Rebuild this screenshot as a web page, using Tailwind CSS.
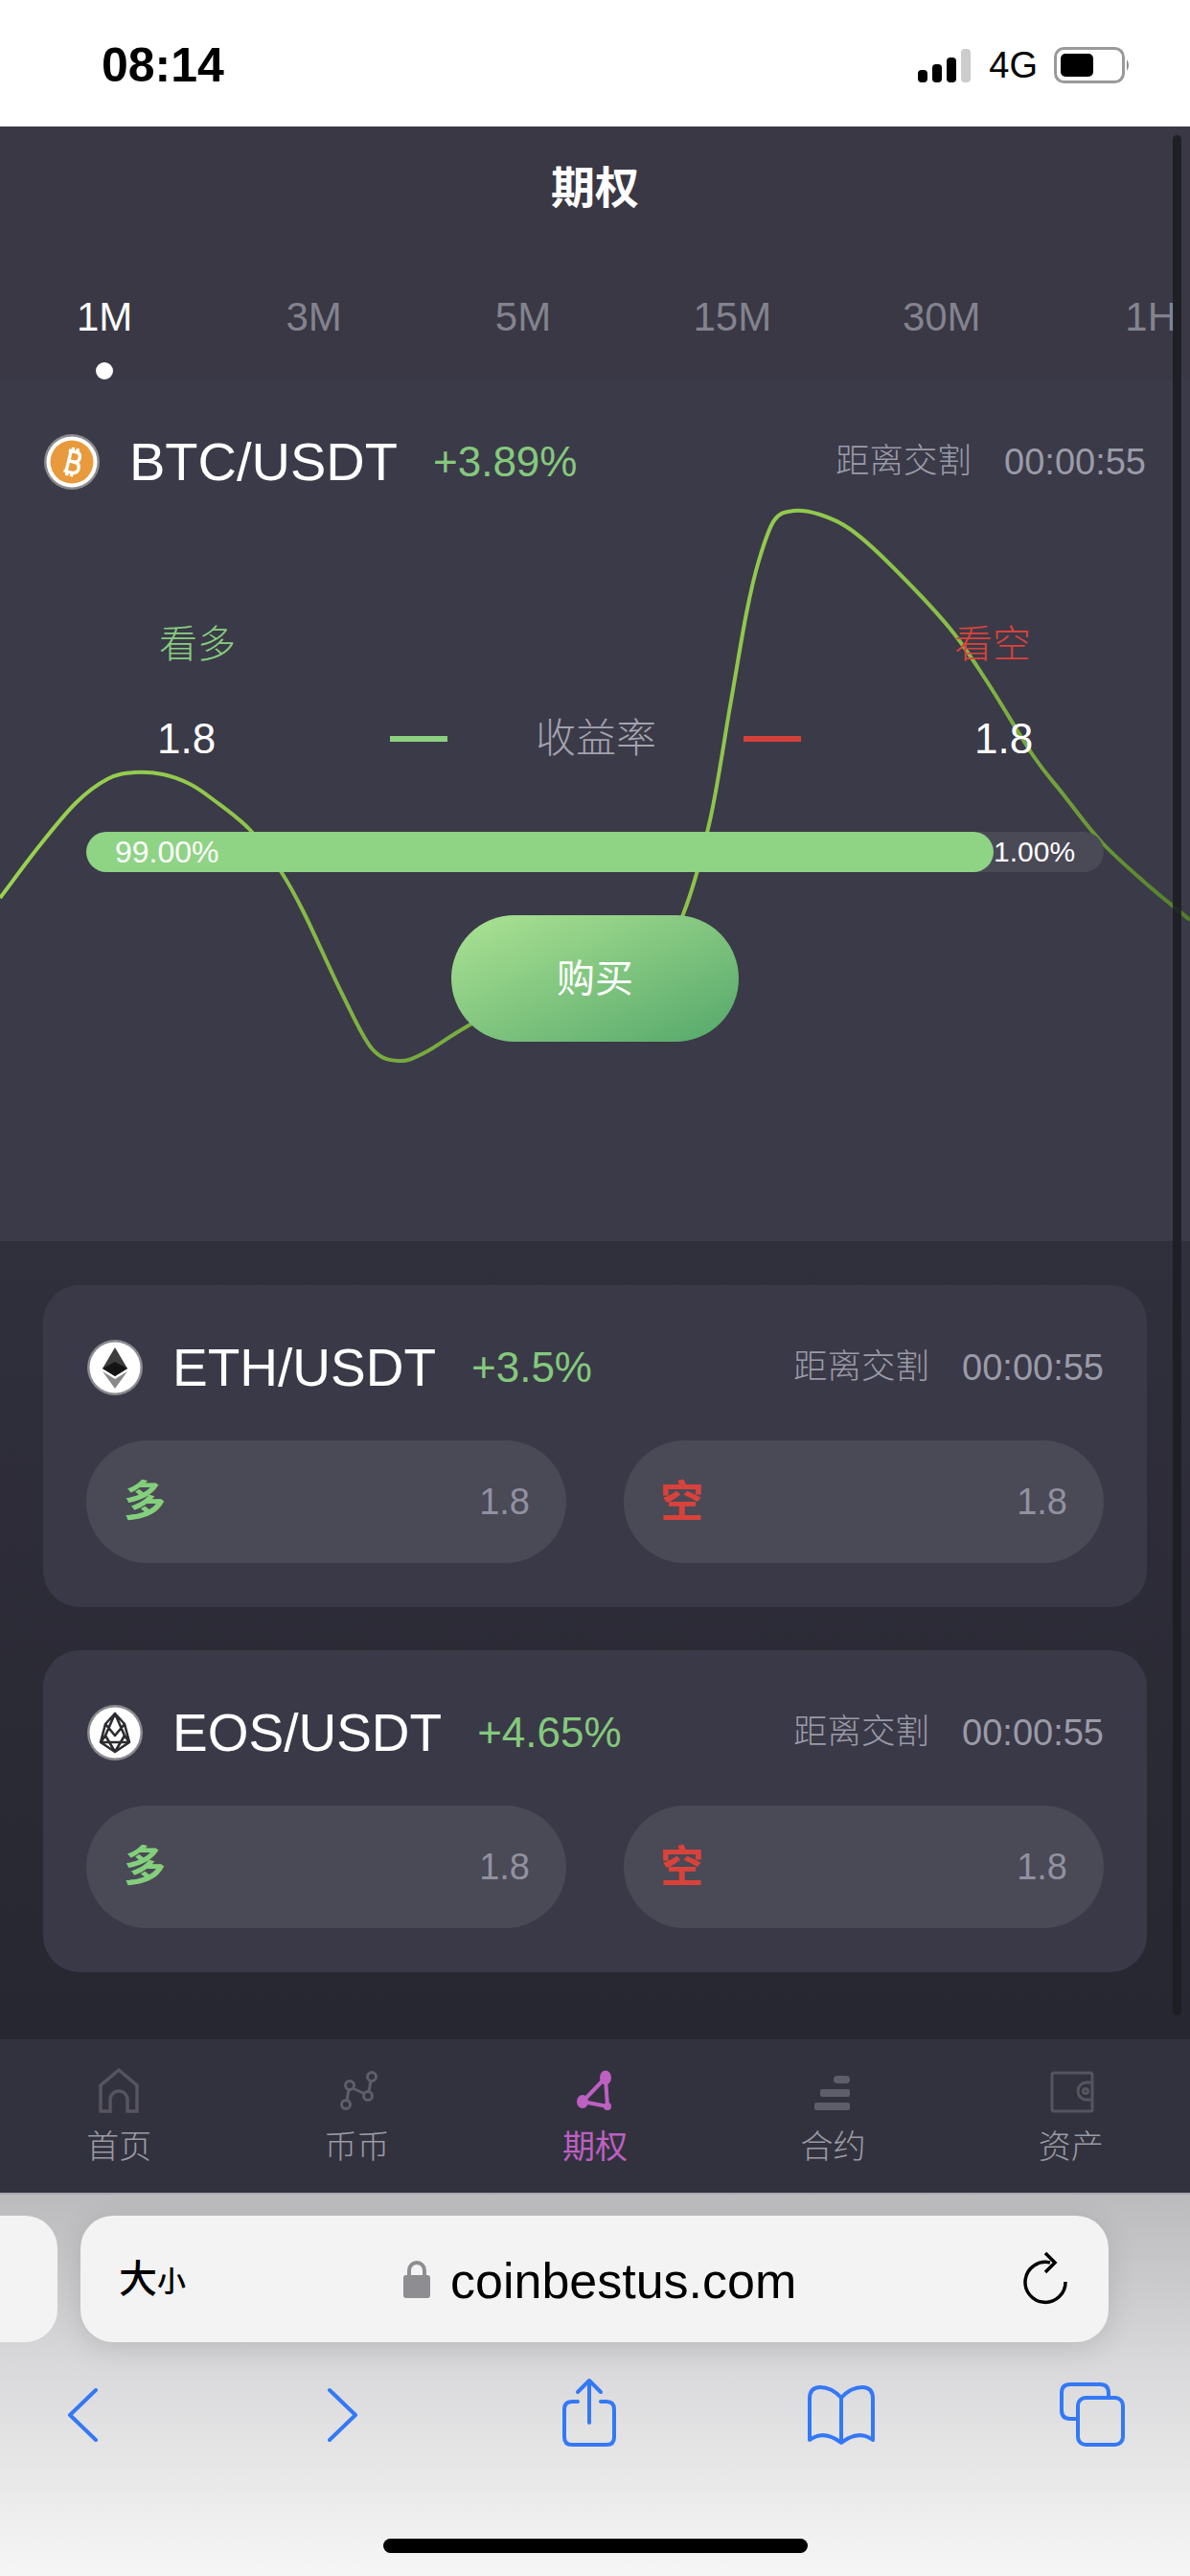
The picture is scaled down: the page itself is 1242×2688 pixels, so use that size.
<!DOCTYPE html>
<html lang="en">
<head>
    <meta charset="UTF-8">
    <meta name="viewport" content="width=device-width, initial-scale=1.0">
    <title>期权</title>
    <script src="https://cdn.jsdelivr.net/npm/@tailwindcss/browser@4"></script>
</head>
<body class="relative w-[1242px] h-[2688px] overflow-hidden bg-white font-['Liberation_Sans','Noto_Sans_CJK_SC',sans-serif]">
    <!-- status bar -->
    <div class="h-[132px] bg-white flex items-center justify-between pl-[106px] pr-[62px] pt-[3px]">
        <span class="text-[50px] leading-none font-bold text-black">08:14</span>
        <div class="flex items-center">
            <svg width="56" height="36" viewBox="0 0 56 36" class="mr-[18px]">
                <rect x="0" y="23" width="10" height="13" rx="4" fill="#000"/>
                <rect x="15" y="17" width="10" height="19" rx="4" fill="#000"/>
                <rect x="30" y="10" width="10" height="26" rx="4" fill="#000"/>
                <rect x="45" y="1" width="10" height="35" rx="4" fill="#ccc"/>
            </svg>
            <span class="text-[38px] leading-none text-black mr-[17px]">4G</span>
            <svg width="80" height="38" viewBox="0 0 80 38">
                <rect x="1.5" y="1.5" width="71" height="35" rx="9" fill="none" stroke="#999" stroke-width="3"/>
                <rect x="7" y="7" width="34" height="24" rx="5" fill="#000"/>
                <path d="M76 13 Q80 19 76 25 Z" fill="#888"/>
            </svg>
        </div>
    </div>

    <!-- title + timeframes -->
    <div class="h-[264px] bg-[#393844] overflow-hidden">
        <div class="h-[128px] flex items-center justify-center">
            <h1 class="text-[46px] leading-none font-bold text-white">期权</h1>
        </div>
        <div class="grid grid-cols-[repeat(6,218.4px)] text-[42px] leading-none text-[#83838f] pt-[50px]">
            <div class="flex flex-col items-center text-white"><span>1M</span><span class="mt-[26px] w-[18px] h-[18px] rounded-full bg-white"></span></div>
            <div class="text-center">3M</div>
            <div class="text-center">5M</div>
            <div class="text-center">15M</div>
            <div class="text-center">30M</div>
            <div class="text-center">1H</div>
        </div>
    </div>

    <!-- current pair -->
    <section class="relative h-[899px] bg-[#3b3a48] overflow-hidden">
        <svg class="absolute inset-0" width="1242" height="899" viewBox="0 396 1242 899" fill="none">
            <defs>
                <linearGradient id="lineFade" gradientUnits="userSpaceOnUse" x1="0" y1="0" x2="1242" y2="0">
                    <stop offset="0" stop-color="#9bd350"/>
                    <stop offset="0.2" stop-color="#8fc64b"/>
                    <stop offset="0.34" stop-color="#76a93e"/>
                    <stop offset="0.66" stop-color="#93cc4e"/>
                    <stop offset="0.8" stop-color="#89be48"/>
                    <stop offset="1" stop-color="#527d2a"/>
                </linearGradient>
            </defs>
            <path id="priceLine" stroke="url(#lineFade)" stroke-width="4"/>
        </svg>

        <div class="relative flex items-center h-[172px] pl-[45px] pr-[46px]">
            <svg width="60" height="60" viewBox="0 0 60 60" class="mr-[30px]">
                <circle cx="30" cy="30" r="29" fill="#8b8b8f"/>
                <circle cx="30" cy="30" r="26.500" fill="#fff"/>
                <circle cx="30" cy="30" r="22.500" fill="#e99a3c"/>
                <g transform="rotate(14 30 30)" fill="none" stroke="#fff" stroke-width="3.400">
                    <path d="M24 19 H32 Q37 19 37 24 Q37 29.500 32 29.500 H25 M32 29.500 Q38.500 29.500 38.500 35 Q38.500 41 32 41 H24 M26.500 19 V41 M28 15 V19 M33 15 V19 M28 41 V45 M33 41 V45"/>
                </g>
            </svg>
            <span class="text-[56px] leading-none text-white">BTC/USDT</span>
            <span class="ml-[37px] text-[44px] leading-none text-[#84c97c]">+3.89%</span>
            <span class="ml-auto text-[35.500px] leading-none text-[#9a9ba8] font-light">距离交割</span>
            <span class="ml-[34px] text-[38px] leading-none text-[#9a9ba8]">00:00:55</span>
        </div>

        <div class="relative flex justify-between pl-[166px] pr-[166px] mt-[72px] text-[40px] leading-[64px] font-light">
            <span class="text-[#86cc7f]">看多</span>
            <span class="text-[#d9423a]">看空</span>
        </div>
        <div class="relative flex items-center mt-[35px] h-[64px]">
            <span class="ml-[164px] w-[64px] text-[44px] leading-none text-white">1.8</span>
            <span class="ml-[179px] w-[60px] h-[6px] bg-[#8bd07e]"></span>
            <span class="ml-[92px] w-[126px] whitespace-nowrap text-center text-[42px] leading-none text-[#a2a3ae] font-light">收益率</span>
            <span class="ml-[91px] w-[60px] h-[6px] bg-[#d4413a]"></span>
            <span class="ml-[181px] text-[44px] leading-none text-white">1.8</span>
        </div>

        <div class="relative mx-[90px] mt-[65px] h-[42px] rounded-full bg-[#4a4956] flex items-center text-[30px] leading-none text-white">
            <div class="h-full w-[947px] rounded-full bg-[#8fd385] flex items-center pl-[30px] text-[32px]">99.00%</div>
            <span class="font-light">1.00%</span>
        </div>

        <div class="relative mt-[45px] flex justify-center">
            <button class="w-[300px] h-[132px] rounded-full bg-gradient-to-br from-[#ace394] to-[#54a86b] text-[40px] leading-none text-white">购买</button>
        </div>
    </section>

    <!-- other pairs -->
    <main class="h-[833px] bg-gradient-to-b from-[#302f3c] to-[#272731] px-[45px] pt-[46px] flex flex-col gap-[45px]">
        <article class="h-[336px] rounded-[38px] bg-[#3a3947] px-[45px]">
            <div class="h-[162px] pt-[10px] flex items-center">
                <svg width="60" height="60" viewBox="0 0 60 60" class="mr-[30px]">
                    <circle cx="30" cy="30" r="29" fill="#8b8b8f"/>
                    <circle cx="30" cy="30" r="26.500" fill="#fff"/>
                    <path d="M30 9 L43 31 L30 39 L17 31 Z" fill="#3c3c3d"/>
                    <path d="M30 24 L43 31 L30 39 L17 31 Z" fill="#141414"/>
                    <path d="M17 34 L30 42 L43 34 L30 52 Z" fill="#8a8a8a"/>
                </svg>
                <span class="text-[55px] leading-none text-white">ETH/USDT</span>
                <span class="ml-[37px] text-[44px] leading-none text-[#84c97c]">+3.5%</span>
                <span class="ml-auto text-[35.500px] leading-none text-[#9a9ba8] font-light">距离交割</span>
                <span class="ml-[34px] text-[38px] leading-none text-[#9a9ba8]">00:00:55</span>
            </div>
            <div class="grid grid-cols-2 gap-[60px]">
                <div class="h-[128px] rounded-full bg-[#4a4956] flex items-center justify-between pl-[39px] pr-[38px]">
                    <span class="text-[44px] leading-none font-bold text-[#84cf7c]">多</span>
                    <span class="text-[38px] leading-none text-[#9091a0]">1.8</span>
                </div>
                <div class="h-[128px] rounded-full bg-[#4a4956] flex items-center justify-between pl-[38px] pr-[38px]">
                    <span class="text-[45px] leading-none font-bold text-[#d9423a]">空</span>
                    <span class="text-[38px] leading-none text-[#9091a0]">1.8</span>
                </div>
            </div>
        </article>

        <article class="h-[336px] rounded-[38px] bg-[#3a3947] px-[45px]">
            <div class="h-[162px] pt-[10px] flex items-center">
                <svg width="60" height="60" viewBox="0 0 60 60" class="mr-[30px]">
                    <circle cx="30" cy="30" r="29" fill="#8b8b8f"/>
                    <circle cx="30" cy="30" r="26.500" fill="#fff"/>
                    <path d="M30 10 L40 21 L45 40 L30 50 L15 40 L20 21 Z M20 21 L30 33 L40 21 M30 10 L20 33 L30 50 L40 33 L30 10 M15 40 L20 33 M45 40 L40 33 M15 40 H45" fill="none" stroke="#2c2c30" stroke-width="2.600" stroke-linejoin="round"/>
                </svg>
                <span class="text-[55px] leading-none text-white">EOS/USDT</span>
                <span class="ml-[37px] text-[44px] leading-none text-[#84c97c]">+4.65%</span>
                <span class="ml-auto text-[35.500px] leading-none text-[#9a9ba8] font-light">距离交割</span>
                <span class="ml-[34px] text-[38px] leading-none text-[#9a9ba8]">00:00:55</span>
            </div>
            <div class="grid grid-cols-2 gap-[60px]">
                <div class="h-[128px] rounded-full bg-[#4a4956] flex items-center justify-between pl-[39px] pr-[38px]">
                    <span class="text-[44px] leading-none font-bold text-[#84cf7c]">多</span>
                    <span class="text-[38px] leading-none text-[#9091a0]">1.8</span>
                </div>
                <div class="h-[128px] rounded-full bg-[#4a4956] flex items-center justify-between pl-[38px] pr-[38px]">
                    <span class="text-[45px] leading-none font-bold text-[#d9423a]">空</span>
                    <span class="text-[38px] leading-none text-[#9091a0]">1.8</span>
                </div>
            </div>
        </article>
    </main>

    <!-- tab bar -->
    <nav class="h-[160px] bg-[#32323e] grid grid-cols-5 pt-[30px] text-[34px] leading-none text-[#9a9ba5] font-light">
        <div class="flex flex-col items-center gap-[17px]">
            <svg width="48" height="48" viewBox="0 0 48 48" fill="none" stroke="#55545f" stroke-width="3.500">
                <path d="M5 45 V18 L24 2 L43 18 V45 H33 V33 A9 9 0 0 0 15 33 V45 Z"/>
            </svg>
            <span>首页</span>
        </div>
        <div class="flex flex-col items-center gap-[17px]">
            <svg width="48" height="48" viewBox="0 0 48 48" fill="none" stroke="#5f5d68" stroke-width="3">
                <circle cx="12" cy="38" r="4.500"/><circle cx="16" cy="18" r="4.500"/><circle cx="35" cy="29" r="4.500"/><circle cx="39" cy="9" r="4.500"/>
                <path d="M13 34 L15 22 M19 21 L32 27 M36 25 L38 13"/>
            </svg>
            <span>币币</span>
        </div>
        <div class="flex flex-col items-center gap-[17px] text-[#bd60c2] font-normal">
            <svg width="48" height="48" viewBox="0 0 48 48" fill="none" stroke="#bd60c2" stroke-width="4">
                <path d="M35 10 L11 35 L37 40 Z"/>
                <ellipse cx="35" cy="10" rx="6" ry="7.500" fill="#bd60c2" stroke="none"/>
                <ellipse cx="11" cy="35" rx="6" ry="7" fill="#bd60c2" stroke="none"/>
                <circle cx="37" cy="40" r="4" fill="#bd60c2" stroke="none"/>
            </svg>
            <span>期权</span>
        </div>
        <div class="flex flex-col items-center gap-[17px]">
            <svg width="48" height="48" viewBox="0 0 48 48" fill="#5e5d6a">
                <rect x="25" y="8" width="17" height="8" rx="4"/>
                <rect x="11" y="22" width="31" height="8" rx="2"/>
                <rect x="5" y="36" width="37" height="8" rx="2"/>
            </svg>
            <span>合约</span>
        </div>
        <div class="flex flex-col items-center gap-[17px]">
            <svg width="48" height="48" viewBox="0 0 48 48" fill="none" stroke="#55545f" stroke-width="3">
                <rect x="4" y="5" width="42" height="40" rx="2"/>
                <path d="M46 15 H40 A9 9 0 0 0 40 33 H46"/>
                <circle cx="39" cy="24" r="2.500"/>
            </svg>
            <span>资产</span>
        </div>
    </nav>

    <!-- browser chrome -->
    <div class="relative h-[400px] bg-gradient-to-b from-[#bbbbbd] via-[#d9d9db] via-45% to-[#f6f6f6] border-t-[2px] border-[#a9a9ad]">
        <div class="flex pt-[22px] gap-[24px]">
            <div class="w-[60px] h-[132px] rounded-r-[34px] bg-[#f3f3f3]"></div>
            <div class="relative w-[1073px] h-[132px] rounded-[34px] bg-[#f3f3f3] shadow-[0_6px_30px_rgba(0,0,0,0.12)] flex items-center">
                <span class="ml-[40px] text-[40px] leading-none font-medium text-black">大</span><span class="text-[30px] leading-none font-medium text-black mt-[6px]">小</span>
                <svg width="28" height="40" viewBox="0 0 28 40" class="ml-[227px]">
                    <path d="M6 18 V11 a8 8 0 0 1 16 0 V18" fill="none" stroke="#8d8d92" stroke-width="4"/>
                    <rect x="0" y="16" width="28" height="24" rx="3" fill="#8d8d92"/>
                </svg>
                <span class="ml-[21px] mt-[4px] text-[52px] leading-none text-black">coinbestus.com</span>
                <svg width="46" height="56" viewBox="0 0 46 56" fill="none" stroke="#000" stroke-width="3.500" class="ml-auto mr-[43px]">
                    <path d="M28 11 A21 21 0 1 0 44 31"/>
                    <path d="M23 1 L33 11 L23 21"/>
                </svg>
            </div>
        </div>
        <div class="absolute left-0 right-0 top-[190px] h-[80px]">
            <svg class="absolute inset-0" width="1242" height="80" viewBox="0 2480 1242 80" fill="none" stroke="#3478f6" stroke-width="4" stroke-linecap="round" stroke-linejoin="round">
                <path d="M100 2494 L73 2520 L100 2546"/>
                <path d="M344 2494 L371 2520 L344 2546"/>
                <path d="M603 2506 H597 Q589 2506 589 2514 V2543 Q589 2551 597 2551 H633 Q641 2551 641 2543 V2514 Q641 2506 633 2506 H627"/>
                <path d="M615 2528 V2484 M603 2496 L615 2484 L627 2496"/>
                <path d="M878 2502 Q868 2491 856 2491 Q845 2491 845 2503 V2546 Q860 2535 878 2549 Q896 2535 911 2546 V2503 Q911 2491 900 2491 Q888 2491 878 2502 V2549"/>
                <path d="M1124 2524 H1117 Q1108 2524 1108 2515 V2497 Q1108 2488 1117 2488 H1148 Q1157 2488 1157 2497 V2502"/>
                <rect x="1125" y="2502" width="47" height="49" rx="8"/>
            </svg>
        </div>
        <div class="absolute left-[400px] top-[359px] w-[443px] h-[15px] rounded-full bg-black"></div>
    </div>

    <!-- page scrollbar -->
    <div class="absolute left-[1224px] top-[141px] w-[9px] h-[1962px] rounded-full bg-[#1d1e24]/90"></div>

    <script>
        // price curve, catmull-rom through the sampled points
        const pts = [[-40,990],[0,937],[40,884],[79,838],[112,813],[140,806],[170,808],[198,818],[222,834],[261,866],[293,909],[317,952],[357,1037],[388,1094],[416,1107],[444,1098],[491,1069],[600,1010],[690,985],[713,954],[741,856],[762,737],[779,640],[792,585],[808,543],[828,533],[856,537],[887,552],[927,587],[990,654],[1030,711],[1078,788],[1109,828],[1149,878],[1195,921],[1242,960],[1290,1000]];
        let d = `M${pts[1][0]} ${pts[1][1]}`;
        for (let i = 1; i < pts.length - 2; i++) {
            const [p0, p1, p2, p3] = [pts[i - 1], pts[i], pts[i + 1], pts[i + 2]];
            const c1 = [p1[0] + (p2[0] - p0[0]) / 6, p1[1] + (p2[1] - p0[1]) / 6];
            const c2 = [p2[0] - (p3[0] - p1[0]) / 6, p2[1] - (p3[1] - p1[1]) / 6];
            d += ` C${c1[0]} ${c1[1]} ${c2[0]} ${c2[1]} ${p2[0]} ${p2[1]}`;
        }
        document.getElementById('priceLine').setAttribute('d', d);
    </script>
</body>
</html>
